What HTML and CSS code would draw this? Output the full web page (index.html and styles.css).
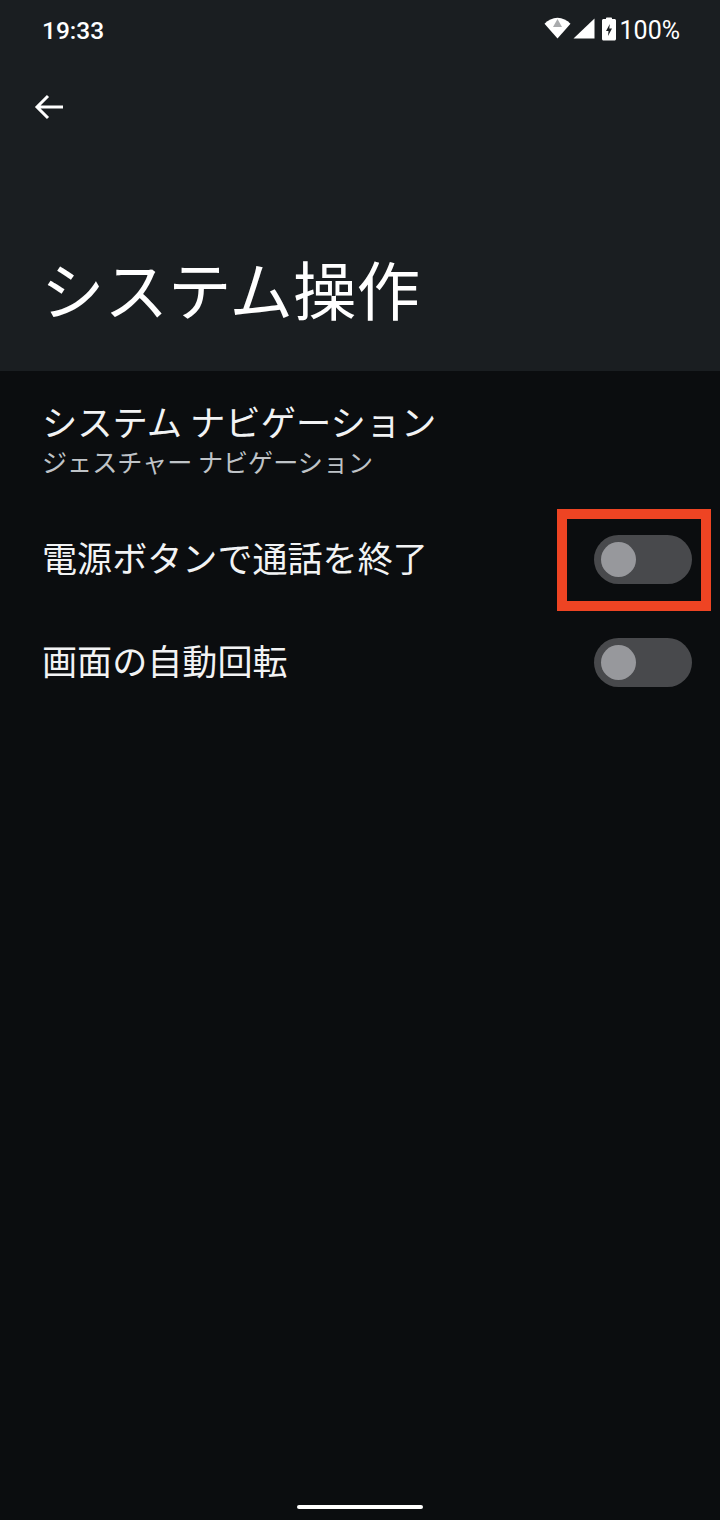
FILE: index.html
```html
<!DOCTYPE html>
<html lang="ja">
<head>
<meta charset="utf-8">
<title>システム操作</title>
<link rel="stylesheet" href="styles.css">
</head>
<body>
<div class="screen">
  <header class="header">
    <div class="status">
      <span class="time">19:33</span>
      <div class="status-right">
        <svg class="ic-wifi" width="27" height="22" viewBox="0 0 27 22"><path d="M13.500 21.500 .5 6.800C4 3 8.500 .7 13.500 .7s9.500 2.300 13 6.100z" fill="#fff"/><path d="M13.500 2 18 10H9z" fill="#a9abad"/></svg>
        <svg class="ic-signal" width="22" height="21" viewBox="0 0 22 21"><path d="M21.500 .5V20.500H.5z" fill="#fff"/></svg>
        <svg class="ic-batt" width="14" height="24" viewBox="0 0 14 24"><path d="M4 2V1.500C4 .8 4.500 .5 5 .5h4c.6 0 1 .4 1 1V2h2.500c.8 0 1.500.7 1.500 1.500v18.500c0 .8-.7 1.500-1.500 1.500h-11c-.8 0-1.500-.7-1.500-1.500V3.500C0 2.700.7 2 1.500 2z" fill="#fff"/><path d="M7.800 7 4 14h2.500l-.5 5 4-7.500H7.300z" fill="#1a1e21"/></svg>
        <span class="pct">100%</span>
      </div>
    </div>
    <div class="toolbar">
      <svg width="30" height="26" viewBox="0 0 30 26"><path d="M29 13H3M14 2 3 13l11 11" fill="none" stroke="#fff" stroke-width="3"/></svg>
    </div>
    <h1 class="title">システム操作</h1>
  </header>
  <main class="list">
    <div class="nav-row">
      <div class="row-title">システム ナビゲーション</div>
      <div class="row-sub">ジェスチャー ナビゲーション</div>
    </div>
    <div class="switch-row">
      <span class="row-title row-label">電源ボタンで通話を終了</span>
      <span class="switch"><span class="knob"></span></span>
      <span class="highlight"></span>
    </div>
    <div class="switch-row">
      <span class="row-title row-label">画面の自動回転</span>
      <span class="switch"><span class="knob"></span></span>
    </div>
  </main>
  <div class="home-bar"></div>
</div>
</body>
</html>
```
FILE: styles.css
```css
* { box-sizing: border-box; }
html, body { margin: 0; padding: 0; }
body { width: 720px; height: 1520px; overflow: hidden; background: #0b0d0f; font-family: "Noto Sans CJK JP", Roboto, sans-serif; color: #fff; }
.screen { position: relative; width: 720px; height: 1520px; display: flex; flex-direction: column; }
.header { height: 371px; flex: none; background: #1a1e21; display: flex; flex-direction: column; }
.status { height: 60px; display: flex; align-items: center; justify-content: space-between; padding: 0 40px 0 42px; font-family: Roboto, sans-serif; font-size: 24.5px; font-weight: 500; color: #fff; }
.status-right { display: flex; align-items: center; }
.ic-wifi { margin: 0 1px 4px 0; }
.ic-signal { margin: 0 7px 3px 1px; }
.ic-batt { margin: 0 4px 2px 0; }
.pct { font-weight: 400; font-size: 25px; }
.toolbar { height: 94px; padding: 0 0 0 34px; display: flex; align-items: center; }
.title { margin: 0; padding: 88px 0 0 41px; font-size: 63.5px; font-weight: 400; line-height: 90px; color: #fff; }
.list { display: flex; flex-direction: column; }
.nav-row { height: 137px; padding: 27px 28px 0 42px; }
.row-title { font-size: 35.3px; line-height: 46px; color: #f2f3f4; font-weight: 400; }
.row-label { font-size: 35.1px; margin-bottom: 5px; }
.row-sub { font-size: 25.1px; line-height: 32px; color: #bfc3c7; margin-top: 1px; }
.switch-row { height: 103px; display: flex; align-items: center; justify-content: space-between; position: relative; padding: 0 28px 0 42px; }
.switch { display: block; width: 98px; height: 49px; border-radius: 25px; background: #48494c; padding: 7px; flex: none; }
.knob { display: block; width: 35px; height: 35px; border-radius: 50%; background: #97989c; }
.highlight { position: absolute; left: 557px; top: 1px; width: 154px; height: 102px; border: 10px solid #ee4423; }
.home-bar { position: absolute; left: 297px; top: 1505px; width: 126px; height: 4px; border-radius: 2px; background: #fff; }
```
